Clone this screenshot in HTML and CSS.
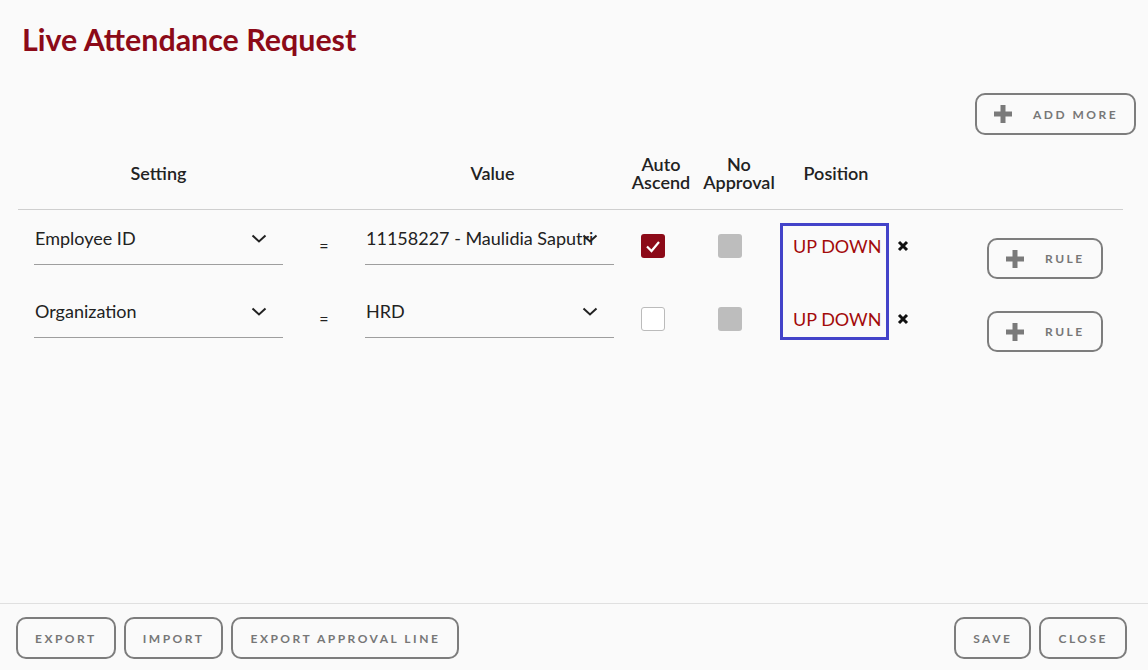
FILE: index.html
```html
<!DOCTYPE html>
<html lang="en">
<head>
<meta charset="utf-8">
<title>Live Attendance Request</title>
<link rel="stylesheet" href="styles.css">
</head>
<body>
<div class="page">
  <main class="content">
    <h1 class="title">Live Attendance Request</h1>
    <div class="toolbar">
      <button class="btn btn-add">
        <svg class="plus" viewBox="0 0 18 18" width="18" height="18"><rect x="0" y="6.5" width="18" height="5" fill="#7a7a7a"/><rect x="6.5" y="0" width="5" height="18" fill="#7a7a7a"/></svg>
        <span>Add More</span>
      </button>
    </div>
    <div class="table">
      <div class="grid head">
        <div class="th">Setting</div>
        <div class="th"></div>
        <div class="th">Value</div>
        <div class="th"><span class="th-line">Auto</span><span class="th-line">Ascend</span></div>
        <div class="th"><span class="th-line">No</span><span class="th-line">Approval</span></div>
        <div class="th">Position</div>
        <div class="th"></div>
        <div class="th"></div>
      </div>
      <div class="divider"></div>
      <div class="grid body">
        <!-- row 1 -->
        <div class="select"><span class="sel-text">Employee ID</span><svg class="chev" viewBox="0 0 16 9" width="16" height="9"><path d="M1.5 1.5 L8 7.5 L14.5 1.5" fill="none" stroke="#222" stroke-width="2"/></svg></div>
        <div class="eq">=</div>
        <div class="select"><span class="sel-text">11158227 - Maulidia Saputri</span><svg class="chev" viewBox="0 0 16 9" width="16" height="9"><path d="M1.5 1.5 L8 7.5 L14.5 1.5" fill="none" stroke="#222" stroke-width="2"/></svg></div>
        <div class="cb-cell cb-auto"><span class="cb cb-on"><svg viewBox="0 0 24 24" width="24" height="24"><path d="M6 12.5 L10.5 17 L18 8" fill="none" stroke="#fff" stroke-width="2.2"/></svg></span></div>
        <div class="cb-cell cb-noap"><span class="cb cb-dis"></span></div>
        <div class="pos-box">
          <div class="updown">UP DOWN</div>
          <div class="updown">UP DOWN</div>
        </div>
        <div class="x-cell"><svg viewBox="0 0 12 12" width="12" height="12"><path d="M2 2 L10 10 M10 2 L2 10" stroke="#111" stroke-width="3" stroke-linecap="butt"/></svg></div>
        <div class="rule-cell"><button class="btn btn-rule"><svg class="plus" viewBox="0 0 18 18" width="18" height="18"><rect x="0" y="6.5" width="18" height="5" fill="#7a7a7a"/><rect x="6.5" y="0" width="5" height="18" fill="#7a7a7a"/></svg><span>Rule</span></button></div>
        <!-- row 2 -->
        <div class="select"><span class="sel-text">Organization</span><svg class="chev" viewBox="0 0 16 9" width="16" height="9"><path d="M1.5 1.5 L8 7.5 L14.5 1.5" fill="none" stroke="#222" stroke-width="2"/></svg></div>
        <div class="eq">=</div>
        <div class="select"><span class="sel-text">HRD</span><svg class="chev" viewBox="0 0 16 9" width="16" height="9"><path d="M1.5 1.5 L8 7.5 L14.5 1.5" fill="none" stroke="#222" stroke-width="2"/></svg></div>
        <div class="cb-cell cb-auto"><span class="cb cb-off"></span></div>
        <div class="cb-cell cb-noap"><span class="cb cb-dis"></span></div>
        <div class="x-cell"><svg viewBox="0 0 12 12" width="12" height="12"><path d="M2 2 L10 10 M10 2 L2 10" stroke="#111" stroke-width="3" stroke-linecap="butt"/></svg></div>
        <div class="rule-cell"><button class="btn btn-rule"><svg class="plus" viewBox="0 0 18 18" width="18" height="18"><rect x="0" y="6.5" width="18" height="5" fill="#7a7a7a"/><rect x="6.5" y="0" width="5" height="18" fill="#7a7a7a"/></svg><span>Rule</span></button></div>
      </div>
    </div>
  </main>
  <footer class="footer">
    <div class="btn-group">
      <button class="btn btn-foot">Export</button>
      <button class="btn btn-foot">Import</button>
      <button class="btn btn-foot">Export Approval Line</button>
    </div>
    <div class="btn-group">
      <button class="btn btn-foot">Save</button>
      <button class="btn btn-foot">Close</button>
    </div>
  </footer>
</div>
</body>
</html>
```

FILE: styles.css
```css
* { box-sizing: border-box; }
html, body {
  margin: 0;
  padding: 0;
  background: #fafafa;
  font-family: Lato, "Open Sans", "Liberation Sans", sans-serif;
  color: #222;
}
.page {
  height: 100vh;
  display: flex;
  flex-direction: column;
}
.content {
  flex: 1;
  padding-top: 21px;
}
.title {
  margin: 0;
  padding-left: 22px;
  font-size: 30.4px;
  line-height: 36px;
  font-weight: 700;
  color: #8c0a18;
}
.toolbar {
  display: flex;
  justify-content: flex-end;
  padding-right: 12px;
  margin-top: 36px;
}
.btn {
  font-family: Lato, "Open Sans", "Liberation Sans", sans-serif;
  background: transparent;
  border: 2px solid #7d7d7d;
  border-radius: 10px;
  color: #777;
  font-size: 12px;
  font-weight: 700;
  letter-spacing: 2.5px;
  text-transform: uppercase;
  height: 42px;
  display: inline-flex;
  align-items: center;
  cursor: pointer;
}
.btn-add {
  width: 161px;
  padding: 0 0 0 17px;
  gap: 21px;
}
.btn-rule {
  width: 116px;
  height: 41px;
  padding: 0 0 0 17px;
  gap: 21px;
}
.plus { flex: none; }
.table {
  margin-top: 20px;
}
.grid {
  display: grid;
  grid-template-columns: 249px 82px 255px 82px 74px 120px 64px 1fr;
  padding-left: 34px;
}
.head {
  align-items: center;
  height: 36px;
  margin-bottom: 18px;
}
.th {
  text-align: center;
  font-size: 18px;
  line-height: 18px;
  font-weight: 600;
  color: #222;
}
.th-line {
  display: block;
  height: 18px;
  line-height: 18px;
}
.divider {
  height: 1px;
  background: #cfcfcf;
  margin: 0 25px 0 18px;
}
.body {
  grid-template-rows: 73px 73px;
  padding-top: 13px;
  align-items: start;
}
.select {
  display: flex;
  align-items: center;
  width: 249px;
  padding: 3px 0 14px 1px;
  border-bottom: 1px solid #9e9e9e;
  font-size: 18px;
  line-height: 24px;
}
.sel-text {
  flex: 1;
  min-width: 0;
  white-space: nowrap;
}
.chev {
  flex: none;
  margin-right: 16px;
}
.eq {
  text-align: center;
  font-size: 16px;
  line-height: 16px;
  padding-top: 15px;
  color: #222;
}
.cb-cell { padding-top: 11px; }
.cb-auto { padding-left: 21px; }
.cb-noap { padding-left: 16px; }
.cb {
  display: block;
  width: 24px;
  height: 24px;
  border-radius: 3px;
}
.cb-on { background: #8c0a18; }
.cb-on svg { display: block; }
.cb-off { background: #fff; border: 1px solid #bbb; }
.cb-dis { background: #bdbdbd; }
.pos-box {
  grid-row: 1 / 3;
  grid-column: 6;
  margin-left: 4px;
  width: 109px;
  height: 117px;
  border: 3px solid #4343c9;
  padding: 8px 0 0 10px;
}
.updown {
  font-size: 18px;
  line-height: 24px;
  color: #a30a0a;
  white-space: nowrap;
}
.updown + .updown { margin-top: 49px; }
.x-cell {
  padding-top: 17px;
  padding-left: 1px;
}
.x-cell svg { display: block; }
.rule-cell {
  padding-top: 15px;
  padding-left: 27px;
}
.footer {
  border-top: 1px solid #e0e0e0;
  display: flex;
  justify-content: space-between;
  padding: 13px 21px 11px 16px;
}
.btn-group {
  display: flex;
  gap: 8px;
}
.btn-foot {
  padding: 0 17px;
  justify-content: center;
}
```
